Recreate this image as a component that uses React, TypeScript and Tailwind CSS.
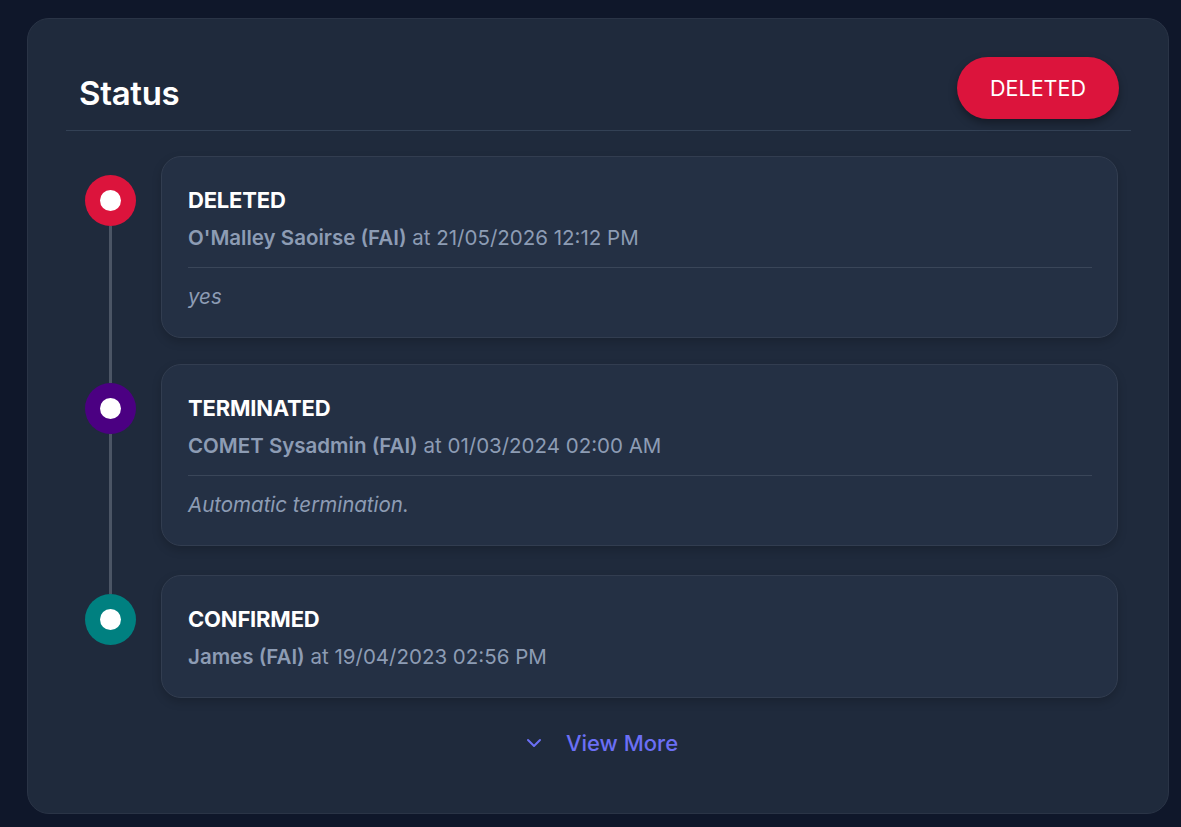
import React from "react";
import { ChevronDown } from "lucide-react";

type Item = {
  status: string;
  color: string;
  who: string;
  when: string;
  note?: string;
  space: string;
};

const items: Item[] = [
  { status: "DELETED", color: "bg-[#dc143c]", who: "O'Malley Saoirse (FAI)", when: "21/05/2026 12:12 PM", note: "yes", space: "pb-[26px]" },
  { status: "TERMINATED", color: "bg-[#4b0082]", who: "COMET Sysadmin (FAI)", when: "01/03/2024 02:00 AM", note: "Automatic termination.", space: "pb-[29px]" },
  { status: "CONFIRMED", color: "bg-[#008080]", who: "James (FAI)", when: "19/04/2023 02:56 PM", space: "" },
];

export default function App() {
  return (
    <div
      className="min-h-[827px] w-full bg-[#0f172a] pt-[18px] pl-[27px] pr-[12px] pb-[15px]"
      style={{ fontFamily: "Inter, 'Noto Sans', sans-serif" }}
    >
      <div className="w-[1142px] rounded-[22px] border border-[#2a3446] bg-[#1f2a3c] pl-[38px] pr-[37px] pt-[38px] pb-[50px]">
        <div className="flex items-center justify-between border-b border-[#334155] pl-[13px] pr-[12px] pb-[11px]">
          <h1 className="mt-[9px] text-[33px] font-semibold leading-[40px] tracking-[-0.3px] text-white">Status</h1>
          <span className="flex h-[62px] w-[162px] items-center justify-center rounded-full bg-[#dc143c] text-[21.5px] font-normal text-white shadow-[0_4px_8px_rgba(0,0,0,0.35)]">
            DELETED
          </span>
        </div>

        <div className="pl-[19px] pr-[13px] pt-[25px]">
          {items.map((it, i) => {
            const first = i === 0;
            const last = i === items.length - 1;
            return (
              <div key={it.status} className="flex gap-[25px]">
                <div className="flex w-[51px] shrink-0 flex-col items-center">
                  <div className={`h-[19px] w-[3px] ${first ? "" : "bg-[#4b5565]"}`} />
                  <div className={`flex h-[51px] w-[51px] items-center justify-center rounded-full ${it.color}`}>
                    <div className="h-[21px] w-[21px] rounded-full bg-white" />
                  </div>
                  {!last && <div className="w-[3px] flex-1 bg-[#4b5565]" />}
                </div>
                <div className={`flex-1 ${it.space}`}>
                  <div className="rounded-[20px] border border-[#323d50] bg-[#243044] pt-[28px] pb-[25px] pl-[26px] pr-[25px] shadow-[0_4px_10px_rgba(0,0,0,0.18)]">
                    <div className="text-[22px] font-bold leading-[30px] tracking-[-0.2px] text-white">{it.status}</div>
                    <div className="mt-[8px] text-[20.5px] leading-[30px] text-[#8d9cb4]">
                      <span className="font-semibold">{it.who}</span> at {it.when}
                    </div>
                    {it.note && (
                      <>
                        <div className="mt-[14px] h-px bg-[#3a4659]" />
                        <div className="mt-[14px] text-[20.5px] italic leading-[30px] text-[#8d9cb4]">{it.note}</div>
                      </>
                    )}
                  </div>
                </div>
              </div>
            );
          })}
        </div>

        <div className="mt-[25px] flex justify-center pl-[8px]">
          <button className="flex h-[40px] items-center gap-[25px] text-[22px] font-medium text-[#6b6ff5]">
            <ChevronDown size={24} strokeWidth={2} className="-mx-[5px]" />
            <span>View More</span>
          </button>
        </div>
      </div>
    </div>
  );
}
